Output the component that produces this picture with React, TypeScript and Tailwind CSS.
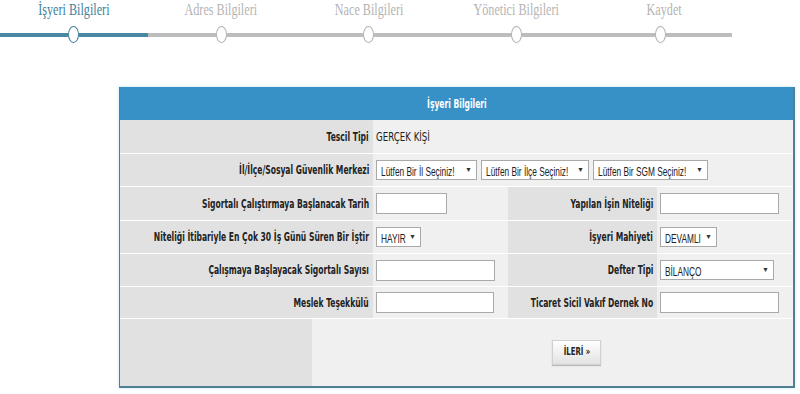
import React from 'react';

const steps = ['İşyeri Bilgileri', 'Adres Bilgileri', 'Nace Bilgileri', 'Yönetici Bilgileri', 'Kaydet'];

const labelFont = "font-['DejaVu_Sans_Condensed','DejaVu_Sans',sans-serif]";
const valueFont = "font-['Liberation_Sans',Arial,sans-serif]";

function Label({ children }: { children: React.ReactNode }) {
  return (
    <div className="flex h-full items-center justify-end bg-[#e1e1e1] pr-[4px]">
      <span className={`inline-block origin-right scale-x-[0.65] whitespace-nowrap text-[13px] font-bold text-[#222] ${labelFont}`}>
        {children}
      </span>
    </div>
  );
}

function Txt({ children }: { children: React.ReactNode }) {
  return (
    <span className={`inline-block origin-left scale-x-[0.64] whitespace-nowrap text-[13px] text-[#222] ${valueFont}`}>
      {children}
    </span>
  );
}

function Select({ text, w }: { text: string; w: string }) {
  return (
    <div className={`flex h-[20px] shrink-0 items-center border border-[#a9a9a9] bg-white pl-[4px] pr-[4px] ${w}`}>
      <div className="min-w-0 flex-1 overflow-hidden">
        <Txt>{text}</Txt>
      </div>
      <span className="shrink-0 text-[7px] text-[#333]">▼</span>
    </div>
  );
}

function Input({ w }: { w: string }) {
  return <div className={`h-[21px] shrink-0 border border-[#a9a9a9] bg-white ${w}`} />;
}

function Value({ children, className = '' }: { children?: React.ReactNode; className?: string }) {
  return <div className={`flex h-full items-center bg-[#f0f0f0] pl-[3px] ${className}`}>{children}</div>;
}

export default function App() {
  return (
    <div className="h-[394px] w-[800px] overflow-hidden bg-white">
      {/* wizard steps */}
      <div className="flex w-[738px]">
        {steps.map((s, i) => {
          const active = i === 0;
          return (
            <div key={s} className="flex w-[147.5px] flex-col">
              <div className="flex h-[26px] items-start justify-center pt-[1px]">
                <span
                  className={`inline-block origin-center scale-x-[0.76] whitespace-nowrap text-[16px] leading-[18px] font-['Liberation_Serif',serif] ${
                    active ? 'text-[#3f7f9c]' : 'text-[#b4b4b4]'
                  }`}
                >
                  {s}
                </span>
              </div>
              <div className="flex h-[17px] items-center">
                <div className={`h-[4px] flex-1 ${active ? 'bg-[#4a87a2]' : 'bg-[#bdbdbd]'}`} />
                <div
                  className={`h-[17px] w-[11px] shrink-0 rounded-[50%] border-[1.5px] bg-white ${
                    active ? 'border-[#3f7f9c]' : 'border-[#b0b0b0]'
                  }`}
                />
                <div className={`h-[4px] flex-1 ${active ? 'bg-[#4a87a2]' : 'bg-[#bdbdbd]'} ${i === 4 ? 'mr-[6px]' : ''}`} />
              </div>
            </div>
          );
        })}
      </div>

      {/* form panel */}
      <div className="ml-[119px] mt-[44px] w-[676px] border-b-2 border-l border-r-2 border-[#4f7f90] shadow-[0_0_3px_#bfe6f2]">
        <div className="flex h-[33px] items-center justify-center bg-[#3790c6]">
          <span className={`inline-block origin-center scale-x-[0.65] text-[13px] font-bold text-white ${labelFont}`}>
            İşyeri Bilgileri
          </span>
        </div>

        <div className="grid h-[33px] grid-cols-[253px_1fr]">
          <Label>Tescil Tipi</Label>
          <Value>
            <span className={`inline-block origin-left scale-x-[0.74] whitespace-nowrap text-[13px] text-[#222] ${labelFont}`}>
              GERÇEK KİŞİ
            </span>
          </Value>
        </div>

        <div className="grid h-[33px] grid-cols-[253px_1fr] border-t border-white">
          <Label>İl/İlçe/Sosyal Güvenlik Merkezi</Label>
          <Value className="gap-[4px]">
            <Select text="Lütfen Bir İl Seçiniz!" w="w-[101px]" />
            <Select text="Lütfen Bir İlçe Seçiniz!" w="w-[108px]" />
            <Select text="Lütfen Bir SGM Seçiniz!" w="w-[115px]" />
          </Value>
        </div>

        <div className="grid h-[34px] grid-cols-[253px_135px_149px_1fr] border-t border-white">
          <Label>Sigortalı Çalıştırmaya Başlanacak Tarih</Label>
          <Value>
            <Input w="w-[71px]" />
          </Value>
          <Label>Yapılan İşin Niteliği</Label>
          <Value>
            <Input w="w-[119px]" />
          </Value>
        </div>

        <div className="grid h-[33px] grid-cols-[253px_135px_149px_1fr] border-t border-white">
          <Label>Niteliği İtibariyle En Çok 30 İş Günü Süren Bir İştir</Label>
          <Value>
            <Select text="HAYIR" w="w-[45px]" />
          </Value>
          <Label>İşyeri Mahiyeti</Label>
          <Value>
            <Select text="DEVAMLI" w="w-[57px]" />
          </Value>
        </div>

        <div className="grid h-[33px] grid-cols-[253px_135px_149px_1fr] border-t border-white">
          <Label>Çalışmaya Başlayacak Sigortalı Sayısı</Label>
          <Value>
            <Input w="w-[119px]" />
          </Value>
          <Label>Defter Tipi</Label>
          <Value>
            <Select text="BİLANÇO" w="w-[114px]" />
          </Value>
        </div>

        <div className="grid h-[32px] grid-cols-[253px_135px_149px_1fr] border-t border-white">
          <Label>Meslek Teşekkülü</Label>
          <Value>
            <Input w="w-[118px]" />
          </Value>
          <Label>Ticaret Sicil Vakıf Dernek No</Label>
          <Value>
            <Input w="w-[119px]" />
          </Value>
        </div>

        <div className="grid h-[68px] grid-cols-[192px_1fr] border-t border-white">
          <div className="bg-[#e1e1e1]" />
          <div className="flex items-center bg-[#f0f0f0] pl-[240px]">
            <button className="flex h-[25px] w-[49px] items-center justify-center border border-[#d0d0d0] bg-gradient-to-b from-white to-[#e2e2e2] shadow-[0_1px_1px_#bbb]">
              <span className={`inline-block scale-x-[0.7] whitespace-nowrap text-[11px] font-bold text-[#222] ${labelFont}`}>
                İLERİ »
              </span>
            </button>
          </div>
        </div>
      </div>
    </div>
  );
}
